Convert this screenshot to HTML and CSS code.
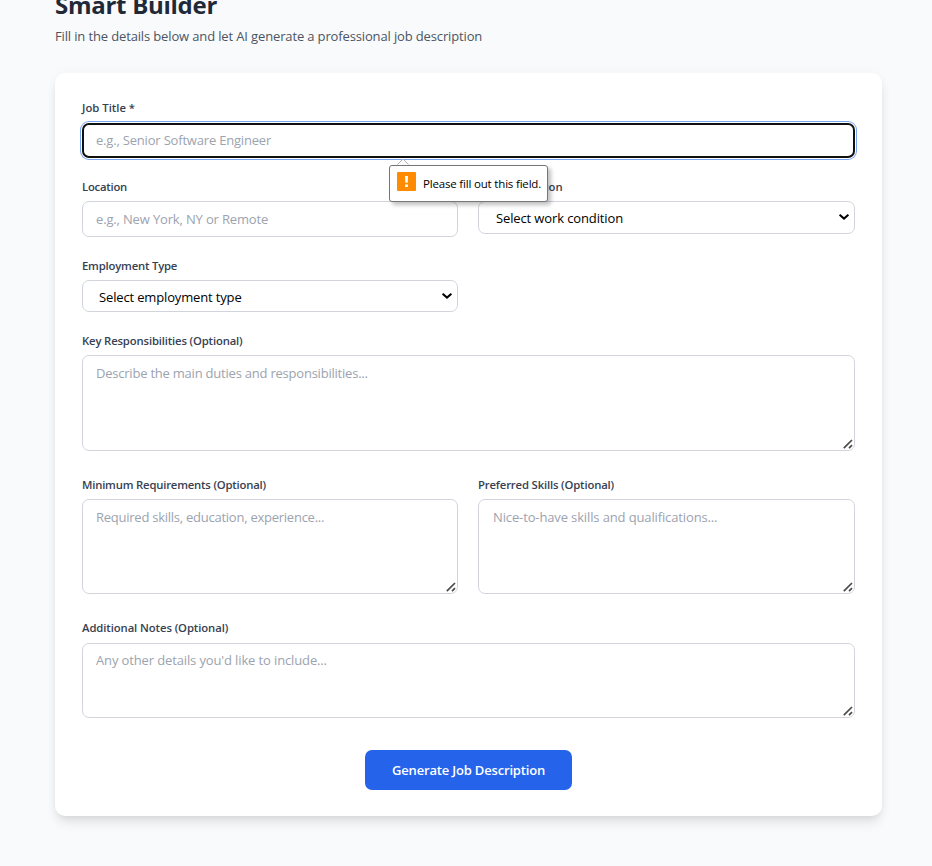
FILE: index.html
```html
<!DOCTYPE html>
<html lang="en">
<head>
<meta charset="utf-8">
<title>Smart Builder</title>
<link rel="stylesheet" href="styles.css">
</head>
<body>
<svg class="sprite" aria-hidden="true">
  <symbol id="chevron" viewBox="0 0 12 8"><path d="M1.6 1.8 6 5.6l4.4-3.8" fill="none" stroke="#000" stroke-width="2"/></symbol>
  <symbol id="grip" viewBox="0 0 10 10"><path d="M.8 9.2 9 1M6 9.2 9 6.2" fill="none" stroke="#4a4a4a" stroke-width="1.7"/></symbol>
</svg>
<main class="page">
  <header class="heading">
    <h1>Smart Builder</h1>
    <p>Fill in the details below and let AI generate a professional job description</p>
  </header>
  <form class="card">
    <div class="field field-title">
      <label class="l-title" for="title">Job Title *</label>
      <div class="control">
        <input id="title" class="box focused" type="text" placeholder="e.g., Senior Software Engineer">
        <div class="bubble">
          <svg class="bubble-arrow" viewBox="0 0 14 8"><path d="M1.5 6.5 7 1l5.5 5.5" fill="none" stroke="#b0b0b0"/></svg>
          <svg class="bubble-icon" viewBox="0 0 19 19"><rect width="19" height="19" rx="1" fill="#ff8c00"/><path d="M8 4h3l-.3 6.8H8.3zM8.1 12.4h2.8V15H8.1z" fill="#fff"/></svg>
          <span>Please fill out this field.</span>
        </div>
      </div>
    </div>
    <div class="row row-place">
      <div class="field">
        <label class="l-location" for="location">Location</label>
        <input id="location" class="box" type="text" placeholder="e.g., New York, NY or Remote">
      </div>
      <div class="field">
        <label class="l-condition" for="condition">Work Condition</label>
        <div class="control">
          <select id="condition" class="box"><option>Select work condition</option></select>
          <svg class="chevron"><use href="#chevron"/></svg>
        </div>
      </div>
    </div>
    <div class="row row-type">
      <div class="field">
        <label class="l-type" for="type">Employment Type</label>
        <div class="control">
          <select id="type" class="box"><option>Select employment type</option></select>
          <svg class="chevron"><use href="#chevron"/></svg>
        </div>
      </div>
    </div>
    <div class="field field-duties">
      <label class="l-duties" for="duties">Key Responsibilities (Optional)</label>
      <div class="control">
        <textarea id="duties" class="box" placeholder="Describe the main duties and responsibilities..."></textarea>
        <svg class="grip"><use href="#grip"/></svg>
      </div>
    </div>
    <div class="row row-skills">
      <div class="field">
        <label class="l-required" for="required">Minimum Requirements (Optional)</label>
        <div class="control">
          <textarea id="required" class="box" placeholder="Required skills, education, experience..."></textarea>
          <svg class="grip"><use href="#grip"/></svg>
        </div>
      </div>
      <div class="field">
        <label class="l-preferred" for="preferred">Preferred Skills (Optional)</label>
        <div class="control">
          <textarea id="preferred" class="box" placeholder="Nice-to-have skills and qualifications..."></textarea>
          <svg class="grip"><use href="#grip"/></svg>
        </div>
      </div>
    </div>
    <div class="field field-notes">
      <label class="l-notes" for="notes">Additional Notes (Optional)</label>
      <div class="control">
        <textarea id="notes" class="box" placeholder="Any other details you'd like to include..."></textarea>
        <svg class="grip"><use href="#grip"/></svg>
      </div>
    </div>
    <button class="submit" type="button">Generate Job Description</button>
  </form>
</main>
</body>
</html>
```
FILE: styles.css
```css
* { box-sizing: border-box; }
html, body { margin: 0; height: 100%; overflow: hidden; }
body {
  background: #f9fafb;
  color: #1f2937;
  font-family: "Segoe UI", "Open Sans", "Noto Sans", sans-serif;
}
.sprite { display: none; }

.page { width: 827px; margin-left: 55px; }
.heading { height: 73px; overflow: hidden; }
h1 { margin: -11px 0 0; font-size: 24px; line-height: 32px; font-weight: 700; letter-spacing: -.28px; }
.heading p { margin: 5px 0 0; font-size: 13px; line-height: 20px; color: #4b5563; letter-spacing: -.14px; }

.card {
  height: 743px;
  padding: 27px 27px 26px;
  background: #fff;
  border-radius: 10px;
  box-shadow: 0 8px 12px -2px rgba(0,0,0,.1), 0 3px 5px -2px rgba(0,0,0,.05), 0 0 12px rgba(0,0,0,.03);
  display: flex;
  flex-direction: column;
}
.row { display: grid; grid-template-columns: 376px 377px; column-gap: 20px; align-items: start; }
.field { display: flex; flex-direction: column; gap: 6px; }
.field-title { gap: 7px; margin-bottom: 21px; }
.row-place, .row-type { margin-bottom: 21px; }
.field-duties { margin-bottom: 26px; }
.row-skills { margin-bottom: 26px; }
.field-notes { gap: 7px; margin-bottom: 32px; }

label { font-size: 11.3px; line-height: 16px; font-weight: 600; color: #374151; white-space: nowrap; }
.l-location { letter-spacing: -.23px; }
.l-condition { letter-spacing: -.03px; }
.l-type { letter-spacing: -.19px; }
.l-required { letter-spacing: -.19px; }
.l-duties { letter-spacing: -.15px; }
.l-preferred { letter-spacing: -.155px; }
.l-notes { letter-spacing: -.09px; }

.control { position: relative; display: flex; }
.box {
  display: block;
  width: 100%;
  margin: 0;
  padding: 8px 13px;
  border: 1px solid #d1d5db;
  border-radius: 7px;
  background: #fff;
  color: #000;
  font: 13px/18px "Segoe UI", "Open Sans", "Noto Sans", sans-serif;
  outline: none;
  appearance: none;
}
.box::placeholder { color: #9ca3af; opacity: 1; }
input.box { height: 36px; }
select.box { padding: 6px 16px; height: 32px; }
textarea.box { resize: none; overflow: hidden; }
input.focused {
  height: 35px;
  border: 2px solid #101010;
  padding: 6px 12px 8px;
  box-shadow: 0 0 0 1px #fff, 0 0 0 2px #78a5f2;
}
#title { letter-spacing: -.19px; }
#location { letter-spacing: -.157px; }
#condition { height: 33px; padding-left: 17px; letter-spacing: -.125px; }
#type { padding: 7px 16px 5px; letter-spacing: -.15px; }
#duties { height: 96px; letter-spacing: -.22px; }
#required { height: 95px; letter-spacing: -.25px; }
#preferred { height: 95px; padding-left: 14px; letter-spacing: -.13px; }
#notes { height: 75px; padding-top: 7px; letter-spacing: -.13px; }

.chevron { position: absolute; right: 5px; top: 12px; width: 12px; height: 8px; pointer-events: none; }
.grip { position: absolute; right: 2px; bottom: 2px; width: 10px; height: 10px; pointer-events: none; }

.bubble {
  position: absolute;
  z-index: 2;
  left: 307px;
  top: 42px;
  width: 159px;
  height: 37px;
  padding: 6px 0 0 7px;
  display: flex;
  gap: 7px;
  background: #fff;
  border: 1px solid #767676;
  border-radius: 3px;
  box-shadow: 3px 3px 4px rgba(0,0,0,.25);
  color: #000;
  font-size: 11.5px;
  letter-spacing: -.18px;
  line-height: 23px;
  white-space: nowrap;
}
.bubble-icon { width: 19px; height: 19px; flex: none; }
.bubble-arrow { position: absolute; left: 6px; top: -8px; width: 14px; height: 8px; }

.submit {
  align-self: center;
  width: 207px;
  height: 40px;
  flex: none;
  padding: 0;
  border: 0;
  border-radius: 7px;
  background: #2563eb;
  color: #fff;
  font: 600 13px/40px "Segoe UI", "Open Sans", "Noto Sans", sans-serif;
  letter-spacing: -.175px;
}
```
